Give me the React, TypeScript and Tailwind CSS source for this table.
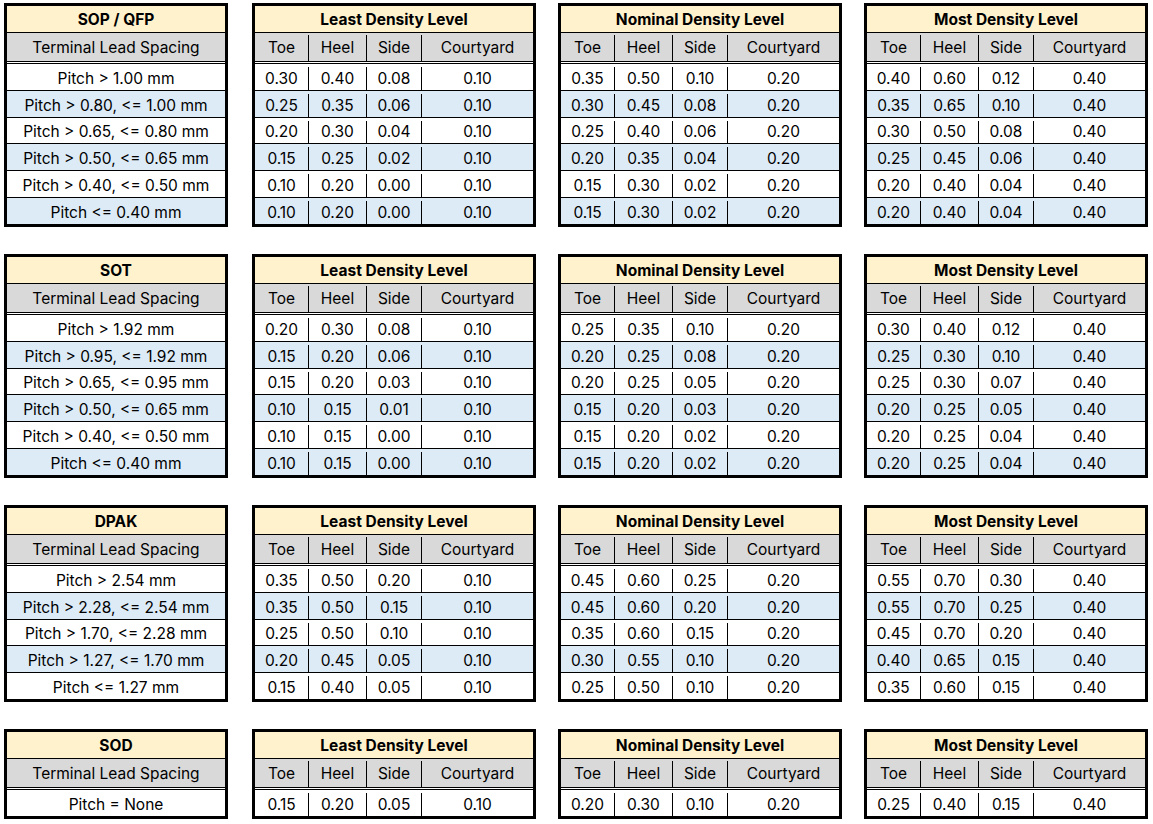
import React from "react";

type Row = { label: string; vals: string[][] };
type Group = { title: string; rows: Row[] };

const groups: Group[] = [
  {
    title: "SOP / QFP",
    rows: [
      { label: "Pitch > 1.00 mm", vals: [["0.30", "0.40", "0.08", "0.10"], ["0.35", "0.50", "0.10", "0.20"], ["0.40", "0.60", "0.12", "0.40"]] },
      { label: "Pitch > 0.80, <= 1.00 mm", vals: [["0.25", "0.35", "0.06", "0.10"], ["0.30", "0.45", "0.08", "0.20"], ["0.35", "0.65", "0.10", "0.40"]] },
      { label: "Pitch > 0.65, <= 0.80 mm", vals: [["0.20", "0.30", "0.04", "0.10"], ["0.25", "0.40", "0.06", "0.20"], ["0.30", "0.50", "0.08", "0.40"]] },
      { label: "Pitch > 0.50, <= 0.65 mm", vals: [["0.15", "0.25", "0.02", "0.10"], ["0.20", "0.35", "0.04", "0.20"], ["0.25", "0.45", "0.06", "0.40"]] },
      { label: "Pitch > 0.40, <= 0.50 mm", vals: [["0.10", "0.20", "0.00", "0.10"], ["0.15", "0.30", "0.02", "0.20"], ["0.20", "0.40", "0.04", "0.40"]] },
      { label: "Pitch <= 0.40 mm", vals: [["0.10", "0.20", "0.00", "0.10"], ["0.15", "0.30", "0.02", "0.20"], ["0.20", "0.40", "0.04", "0.40"]] },
    ],
  },
  {
    title: "SOT",
    rows: [
      { label: "Pitch > 1.92 mm", vals: [["0.20", "0.30", "0.08", "0.10"], ["0.25", "0.35", "0.10", "0.20"], ["0.30", "0.40", "0.12", "0.40"]] },
      { label: "Pitch > 0.95, <= 1.92 mm", vals: [["0.15", "0.20", "0.06", "0.10"], ["0.20", "0.25", "0.08", "0.20"], ["0.25", "0.30", "0.10", "0.40"]] },
      { label: "Pitch > 0.65, <= 0.95 mm", vals: [["0.15", "0.20", "0.03", "0.10"], ["0.20", "0.25", "0.05", "0.20"], ["0.25", "0.30", "0.07", "0.40"]] },
      { label: "Pitch > 0.50, <= 0.65 mm", vals: [["0.10", "0.15", "0.01", "0.10"], ["0.15", "0.20", "0.03", "0.20"], ["0.20", "0.25", "0.05", "0.40"]] },
      { label: "Pitch > 0.40, <= 0.50 mm", vals: [["0.10", "0.15", "0.00", "0.10"], ["0.15", "0.20", "0.02", "0.20"], ["0.20", "0.25", "0.04", "0.40"]] },
      { label: "Pitch <= 0.40 mm", vals: [["0.10", "0.15", "0.00", "0.10"], ["0.15", "0.20", "0.02", "0.20"], ["0.20", "0.25", "0.04", "0.40"]] },
    ],
  },
  {
    title: "DPAK",
    rows: [
      { label: "Pitch > 2.54 mm", vals: [["0.35", "0.50", "0.20", "0.10"], ["0.45", "0.60", "0.25", "0.20"], ["0.55", "0.70", "0.30", "0.40"]] },
      { label: "Pitch > 2.28, <= 2.54 mm", vals: [["0.35", "0.50", "0.15", "0.10"], ["0.45", "0.60", "0.20", "0.20"], ["0.55", "0.70", "0.25", "0.40"]] },
      { label: "Pitch > 1.70, <= 2.28 mm", vals: [["0.25", "0.50", "0.10", "0.10"], ["0.35", "0.60", "0.15", "0.20"], ["0.45", "0.70", "0.20", "0.40"]] },
      { label: "Pitch > 1.27, <= 1.70 mm", vals: [["0.20", "0.45", "0.05", "0.10"], ["0.30", "0.55", "0.10", "0.20"], ["0.40", "0.65", "0.15", "0.40"]] },
      { label: "Pitch <= 1.27 mm", vals: [["0.15", "0.40", "0.05", "0.10"], ["0.25", "0.50", "0.10", "0.20"], ["0.35", "0.60", "0.15", "0.40"]] },
    ],
  },
  {
    title: "SOD",
    rows: [
      { label: "Pitch = None", vals: [["0.15", "0.20", "0.05", "0.10"], ["0.20", "0.30", "0.10", "0.20"], ["0.25", "0.40", "0.15", "0.40"]] },
    ],
  },
];

const levels = ["Least Density Level", "Nominal Density Level", "Most Density Level"];

const headerCls =
  "h-[27px] pt-[1px] border-b border-black bg-[#FFF2CC] flex items-center justify-center font-bold text-[15.5px]";
const subCls =
  "h-[31px] pt-[2px] border-b-[3px] border-double border-black bg-[#D9D9D9] bg-clip-padding flex text-[15.5px]";

function rowCls(i: number, n: number) {
  const last = i === n - 1;
  const h = i % 3 === 2 || last ? "h-[26px]" : "h-[27px]";
  return `${h} pt-[3px] ${last ? "" : "border-b border-black"} flex text-[15.5px] ${
    i % 2 === 1 ? "bg-[#DDEBF7]" : "bg-white"
  }`;
}

const colW = ["w-[53px]", "w-[58px] border-l border-black", "w-[55px] border-l border-black", "flex-1 border-l border-black"];

function LabelTable({ g }: { g: Group }) {
  return (
    <div className="w-[224px] border-[3px] border-black">
      <div className={headerCls}>{g.title}</div>
      <div className={subCls}>
        <div className="flex-1 flex items-center justify-center">Terminal Lead Spacing</div>
      </div>
      {g.rows.map((r, i) => (
        <div key={i} className={rowCls(i, g.rows.length)}>
          <div className="flex-1 flex items-center justify-center">{r.label}</div>
        </div>
      ))}
    </div>
  );
}

function ValueTable({ g, li }: { g: Group; li: number }) {
  const heads = ["Toe", "Heel", "Side", "Courtyard"];
  return (
    <div className="w-[284px] border-[3px] border-black">
      <div className={headerCls}>{levels[li]}</div>
      <div className={subCls}>
        {heads.map((h, k) => (
          <div key={k} className={`${colW[k]} flex items-center justify-center`}>
            {h}
          </div>
        ))}
      </div>
      {g.rows.map((r, i) => (
        <div key={i} className={rowCls(i, g.rows.length)}>
          {r.vals[li].map((v, k) => (
            <div key={k} className={`${colW[k]} flex items-center justify-center`}>
              {v}
            </div>
          ))}
        </div>
      ))}
    </div>
  );
}

export default function App() {
  return (
    <div className="w-[1153px] min-h-[824px] bg-white text-black font-['Inter','Noto_Sans',sans-serif] pl-[4px] pt-[3px] flex flex-col gap-[27px]">
      {groups.map((g, gi) => (
        <div key={gi} className="flex items-start">
          <LabelTable g={g} />
          <div className="ml-[24px] flex gap-[22px]">
            {levels.map((_, li) => (
              <ValueTable key={li} g={g} li={li} />
            ))}
          </div>
        </div>
      ))}
    </div>
  );
}
